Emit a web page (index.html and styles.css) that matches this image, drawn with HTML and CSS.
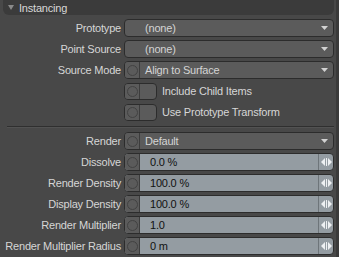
FILE: index.html
```html
<!DOCTYPE HTML>
<html>
	<head>
		<title>Instancing</title>
		<link rel="stylesheet" href="styles.css">
	</head>
	<body>
		<div id="panel">
			<div id="main">
				<!-- Header -->
				<div class="head"><span class="caret"></span>Instancing</div>

				<div class="row">
					<span class="lbl">Prototype</span>
					<div class="ctl drop"><span class="val pad">(none)</span><svg class="arrow" width="7" height="4"><polygon points="0,0 7,0 3.5,4" /></svg></div>
				</div>
				<div class="row">
					<span class="lbl">Point Source</span>
					<div class="ctl drop"><span class="val pad">(none)</span><svg class="arrow" width="7" height="4"><polygon points="0,0 7,0 3.5,4" /></svg></div>
				</div>
				<div class="row">
					<span class="lbl">Source Mode</span>
					<div class="ctl drop"><span class="key"><i></i></span><span class="val">Align to Surface</span><svg class="arrow" width="7" height="4"><polygon points="0,0 7,0 3.5,4" /></svg></div>
				</div>
				<div class="row">
					<span class="lbl"></span>
					<div class="check"><span class="key"><i></i></span><span class="box"></span></div>
					<span class="ctext">Include Child Items</span>
				</div>
				<div class="row">
					<span class="lbl"></span>
					<div class="check"><span class="key"><i></i></span><span class="box"></span></div>
					<span class="ctext">Use Prototype Transform</span>
				</div>

				<div class="sep"></div>

				<div class="row">
					<span class="lbl">Render</span>
					<div class="ctl drop"><span class="key"><i></i></span><span class="val">Default</span><svg class="arrow" width="7" height="4"><polygon points="0,0 7,0 3.5,4" /></svg></div>
				</div>
				<div class="row">
					<span class="lbl">Dissolve</span>
					<div class="ctl num"><span class="key"><i></i></span><span class="nval">0.0 %</span><span class="spin"><svg width="11" height="8"><polygon points="0,4 4,0 4,8" /><rect x="5" y="0" width="1" height="8" /><polygon points="7,0 11,4 7,8" /></svg></span></div>
				</div>
				<div class="row">
					<span class="lbl">Render Density</span>
					<div class="ctl num"><span class="key"><i></i></span><span class="nval">100.0 %</span><span class="spin"><svg width="11" height="8"><polygon points="0,4 4,0 4,8" /><rect x="5" y="0" width="1" height="8" /><polygon points="7,0 11,4 7,8" /></svg></span></div>
				</div>
				<div class="row">
					<span class="lbl">Display Density</span>
					<div class="ctl num"><span class="key"><i></i></span><span class="nval">100.0 %</span><span class="spin"><svg width="11" height="8"><polygon points="0,4 4,0 4,8" /><rect x="5" y="0" width="1" height="8" /><polygon points="7,0 11,4 7,8" /></svg></span></div>
				</div>
				<div class="row">
					<span class="lbl">Render Multiplier</span>
					<div class="ctl num"><span class="key"><i></i></span><span class="nval">1.0</span><span class="spin"><svg width="11" height="8"><polygon points="0,4 4,0 4,8" /><rect x="5" y="0" width="1" height="8" /><polygon points="7,0 11,4 7,8" /></svg></span></div>
				</div>
				<div class="row">
					<span class="lbl">Render Multiplier Radius</span>
					<div class="ctl num"><span class="key"><i></i></span><span class="nval">0 m</span><span class="spin"><svg width="11" height="8"><polygon points="0,4 4,0 4,8" /><rect x="5" y="0" width="1" height="8" /><polygon points="7,0 11,4 7,8" /></svg></span></div>
				</div>
			</div>
			<div id="scroll"></div>
		</div>
	</body>
</html>
```

FILE: styles.css
```css
html, body{
	margin: 0;
	height: 100%;
	background: #484848;
	font-family: "Liberation Sans", Arial, sans-serif;
	font-size: 11px;
	letter-spacing: -0.2px;
	color: #d6d6d6;
	user-select: none;
}
#panel{
	display: flex;
	height: 257px;
	overflow: hidden;
}
#main{
	width: 334px;
}
#scroll{
	margin-left: 2px;
	width: 3px;
	background: #3a3a3a;
}
.head{
	margin: 0 0 4px 3px;
	height: 15px;
	line-height: 14px;
	background: #3b3b3b;
	border-radius: 0 0 6px 6px;
	display: flex;
	align-items: center;
	font-size: 11px;
	color: #d8d8d8;
}
.caret{
	margin: 0 5px 0 5px;
	width: 0;
	height: 0;
	border-left: 3px solid transparent;
	border-right: 3px solid transparent;
	border-top: 5px solid #8a8a8a;
}
.row{
	display: flex;
	align-items: center;
	height: 18px;
	margin-bottom: 3px;
}
.lbl{
	width: 124px;
	padding-right: 3px;
	box-sizing: border-box;
	text-align: right;
	white-space: nowrap;
}
.ctl{
	flex: 1;
	height: 18px;
	box-sizing: border-box;
	border: 1px solid #2c2c2c;
	border-radius: 4px;
	display: flex;
	align-items: center;
	overflow: hidden;
}
.drop{
	background: #5b5b5b;
	color: #d4d4d4;
}
.drop .val{
	flex: 1;
	padding-left: 5px;
}
.drop .val.pad{
	padding-left: 20px;
}
.arrow{
	margin-right: 5px;
	fill: #d2d2d2;
}
.key{
	width: 14px;
	height: 100%;
	flex: none;
	background: #5b5b5b;
	border-right: 1px solid #3c3c3c;
	display: flex;
	align-items: center;
	justify-content: center;
}
.key i{
	width: 9px;
	height: 9px;
	border: 1px solid #424242;
	border-radius: 50%;
}
.check{
	width: 33px;
	height: 17px;
	box-sizing: border-box;
	border: 1px solid #2c2c2c;
	border-radius: 4px;
	display: flex;
	overflow: hidden;
	background: #5b5b5b;
}
.check .box{
	flex: 1;
}
.ctext{
	margin-left: 5px;
	color: #d6d6d6;
}
.sep{
	margin: 5px 0 4px 7px;
	height: 1px;
	background: #2f2f2f;
	border-bottom: 1px solid #525252;
}
.num{
	background: #949ca2;
	color: #111;
}
.nval{
	flex: 1;
	padding-left: 10px;
}
.spin{
	width: 14px;
	height: 100%;
	border-left: 1px solid #6e757a;
	display: flex;
	align-items: center;
	justify-content: center;
}
.spin svg{
	fill: #eef0f2;
}
```
